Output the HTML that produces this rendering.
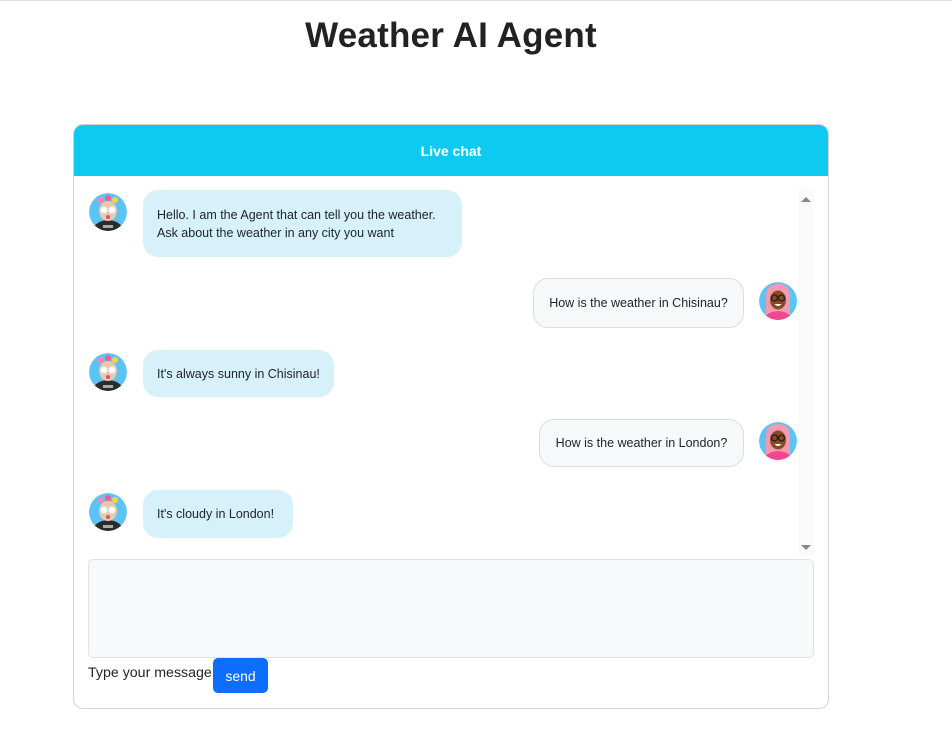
<!DOCTYPE html>
<html><head><meta charset="utf-8"><style>
*{box-sizing:border-box;margin:0;padding:0}
body{width:952px;height:754px;background:#fff;font-family:"Liberation Sans",sans-serif;color:#212529;position:relative;overflow:hidden}
.topline{position:absolute;left:0;top:0;width:952px;height:2px;border-top:1px solid #ddd}
h1{position:absolute;left:0;width:902px;top:16px;text-align:center;font-size:35px;font-weight:bold;color:#222;letter-spacing:0.2px}
.card{position:absolute;left:73px;top:124px;width:756px;height:585px;border:1px solid #d3d3d3;border-radius:10px;overflow:hidden}
.hdr{position:absolute;left:0;top:0;width:100%;height:51px;background:#0dcaf0;color:#fff;font-weight:bold;font-size:14px;display:flex;align-items:center;justify-content:center}
.b{position:absolute;display:flex;align-items:center;font-size:12.5px;line-height:18px;padding:0 14px;border-radius:15px;white-space:nowrap}
.bot{background:#d6f1fa}
.usr{background:#f7f8fa;border:1px solid #dadde1;justify-content:center;padding:0}
.av{position:absolute;width:40px;height:40px}
.sb{position:absolute;left:798px;top:188px;width:16px;height:368px;background:#fafafa}
.ta{position:absolute;left:88px;top:559px;width:726px;height:99px;background:#f8f9fa;border:1px solid #dee2e6;border-radius:5px}
.lbl{position:absolute;left:88px;top:665px;font-size:14.2px;white-space:nowrap}
.btn{position:absolute;left:213px;top:658px;width:55px;height:35px;background:#0d6efd;color:#fff;border-radius:5px;font-size:14px;display:flex;align-items:center;justify-content:center}
</style></head><body>
<div class="topline"></div>
<h1>Weather AI Agent</h1>
<div class="card"><div class="hdr">Live chat</div></div>

<svg width="0" height="0" style="position:absolute"><defs>
<g id="bot"><clipPath id="c1"><circle cx="20" cy="20" r="19"/></clipPath>
<g clip-path="url(#c1)"><circle cx="20" cy="20" r="19" fill="#5cc4f5"/>
<path d="M4 40 Q6 29 20 28 Q34 29 36 40Z" fill="#2b2b2b"/>
<ellipse cx="20" cy="19" rx="9" ry="10" fill="#e9c9a8"/>
<circle cx="16" cy="18" r="3.5" fill="#fff" stroke="#ddd"/><circle cx="24" cy="18" r="3.5" fill="#fff" stroke="#ddd"/>
<ellipse cx="20" cy="25" rx="2" ry="2" fill="#e8496b"/>
<circle cx="13" cy="8" r="3" fill="#f08ab0"/><circle cx="20" cy="6" r="3" fill="#f25c8b"/><circle cx="27" cy="8" r="3" fill="#f7d53a"/>
<rect x="15" y="33" width="10" height="3" fill="#aaa"/></g></g>
<g id="usr"><clipPath id="c2"><circle cx="20" cy="20" r="19"/></clipPath>
<g clip-path="url(#c2)"><circle cx="20" cy="20" r="19" fill="#5cc4f5"/>
<path d="M8 40 L8 14 Q9 3 20 3 Q31 3 32 14 L32 40Z" fill="#f29bb0"/>
<path d="M5 40 Q7 31 20 30 Q33 31 35 40Z" fill="#f0478f"/>
<ellipse cx="20" cy="19" rx="8" ry="9.5" fill="#8a4b22"/>
<circle cx="16.5" cy="17" r="3" fill="none" stroke="#222" stroke-width="1.3"/><circle cx="23.5" cy="17" r="3" fill="none" stroke="#222" stroke-width="1.3"/>
<path d="M16.5 23 Q20 27 23.5 23Z" fill="#fff"/></g></g>
</defs></svg>

<svg class="av" style="left:88px;top:192px"><use href="#bot"/></svg>
<div class="b bot" style="left:143px;top:190px;width:319px;height:67px">Hello. I am the Agent that can tell you the weather.<br>Ask about the weather in any city you want</div>

<div class="b usr" style="left:533px;top:278px;width:211px;height:50px">How is the weather in Chisinau?</div>
<svg class="av" style="left:758px;top:281px"><use href="#usr"/></svg>

<svg class="av" style="left:88px;top:352px"><use href="#bot"/></svg>
<div class="b bot" style="left:143px;top:350px;width:191px;height:47px">It's always sunny in Chisinau!</div>

<div class="b usr" style="left:539px;top:419px;width:205px;height:48px">How is the weather in London?</div>
<svg class="av" style="left:758px;top:421px"><use href="#usr"/></svg>

<svg class="av" style="left:88px;top:492px"><use href="#bot"/></svg>
<div class="b bot" style="left:143px;top:490px;width:150px;height:48px">It's cloudy in London!</div>

<div class="sb"><svg width="16" height="368"><path d="M3 14 L8 9 L13 14Z" fill="#888"/><path d="M3 357 L8 362 L13 357Z" fill="#888"/></svg></div>

<div class="ta"></div>
<div class="lbl">Type your message</div>
<div class="btn">send</div>
</body></html>
